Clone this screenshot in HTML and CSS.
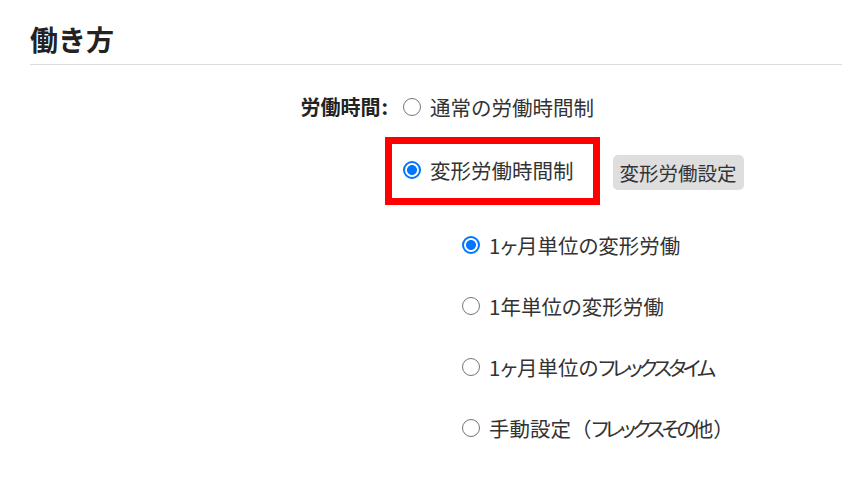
FILE: index.html
```html
<!DOCTYPE html>
<html lang="ja">
<head>
<meta charset="utf-8">
<link rel="stylesheet" href="styles.css">
</head>
<body>
<div class="page">
  <h2 class="title">働き方</h2>
  <div class="field">
    <div class="label">労働時間<span class="colon">:</span></div>
    <div class="options">
      <label class="opt"><input type="radio" name="wt"><span>通常の労働時間制</span></label>
      <div class="row2">
        <label class="opt hl"><input type="radio" name="wt" checked><span>変形労働時間制</span></label>
        <button class="btn" type="button">変形労働設定</button>
      </div>
      <div class="sub">
        <label class="opt"><input type="radio" name="sub" checked><span>1ヶ月単位の変形労働</span></label>
        <label class="opt"><input type="radio" name="sub"><span>1年単位の変形労働</span></label>
        <label class="opt"><input type="radio" name="sub"><span>1ヶ月単位の<span class="kana">フレックスタイム</span></span></label>
        <label class="opt"><input type="radio" name="sub"><span>手動設定<span class="paren">（</span><span class="kana">フレックスその</span>他<span class="paren">）</span></span></label>
      </div>
    </div>
  </div>
</div>
</body>
</html>
```
FILE: styles.css
```css
html, body {
  margin: 0;
  padding: 0;
  background: #fff;
}
body {
  font-family: "Noto Sans CJK JP", "Noto Sans", sans-serif;
  color: #333;
}
.page {
  padding-left: 30px;
}
.title {
  margin: 22px 0 0 0;
  font-size: 28px;
  line-height: 34px;
  font-weight: 700;
  color: #222;
  padding-bottom: 8px;
  border-bottom: 1px solid #dcdcdc;
}
.field {
  display: grid;
  grid-template-columns: 360px auto;
  column-gap: 13px;
  margin-top: 30px;
  font-size: 20.5px;
}
.label {
  text-align: right;
  font-weight: 700;
  font-size: 20px;
  line-height: 24px;
  color: #222;
  padding-right: 2px;
}
.colon {
  margin-left: 1px;
}
.options {
  display: flex;
  flex-direction: column;
}
.opt {
  display: flex;
  align-items: center;
  gap: 9px;
  height: 24px;
  line-height: 24px;
  white-space: nowrap;
}
.opt input {
  appearance: none;
  -webkit-appearance: none;
  margin: 0;
  width: 18px;
  height: 18px;
  flex: none;
  border: 1.5px solid #767676;
  border-radius: 50%;
  background: #fff;
  box-sizing: border-box;
}
.opt input:checked {
  border: 2px solid #0075ff;
  background: radial-gradient(circle, #0075ff 0 4.6px, #fff 5.3px);
}
.row2 {
  display: flex;
  align-items: center;
  gap: 13px;
  margin-top: 18px;
}
.opt.hl {
  height: 51px;
  margin-left: -18px;
  padding: 0 19px 3px 11px;
  border: 7px solid #ff0000;
}
.btn {
  font-family: inherit;
  font-size: 19.5px;
  line-height: 23px;
  color: #333;
  background: #dedede;
  border: none;
  border-radius: 5px;
  padding: 6px 7px;
  height: 35px;
  margin-top: 2px;
}
.sub {
  display: flex;
  flex-direction: column;
  gap: 37px;
  margin-top: 28px;
  padding-left: 59px;
}
.sub .opt span {
  font-feature-settings: "palt";
}
.sub .opt .paren {
  font-feature-settings: normal;
}
.kana {
  letter-spacing: -3.5px;
}
```
